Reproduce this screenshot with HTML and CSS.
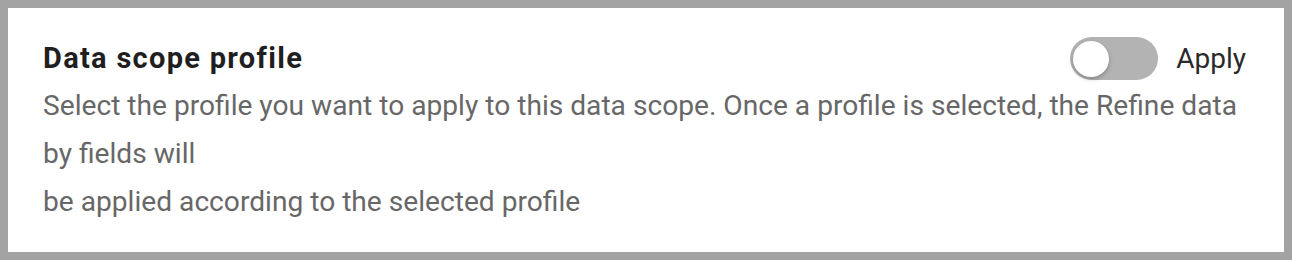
FILE: index.html
```html
<!DOCTYPE html>
<html lang="en">
<head>
  <meta charset="UTF-8">
  <title>Data scope profile</title>
  <link rel="stylesheet" href="styles.css">
</head>
<body>

  <div class="card">
    <div class="card-header">
      <h2>Data scope profile</h2>
      <label class="switch">
        <input type="checkbox">
        <span class="track"><span class="knob"></span></span>
        <span class="switch-label">Apply</span>
      </label>
    </div>
    <p class="desc">Select the profile you want to apply to this data scope. Once a profile is selected, the Refine data by fields will<br>be applied according to the selected profile</p>
  </div>

</body>
</html>
```

FILE: styles.css
```css
html {
  background-color: #a3a3a3;
}

body {
  font-family: Roboto, "Liberation Sans", Arial, sans-serif;
  margin: 8px;
}

.card {
  background-color: white;
  height: 244px;
  box-sizing: border-box;
  padding: 26px 38px 0 35px;
}

.card-header {
  display: flex;
  align-items: center;
  justify-content: space-between;
  height: 48px;
}

.card-header h2 {
  margin: 0;
  font-size: 29px;
  font-weight: 700;
  letter-spacing: 1.3px;
  color: #1f1f1f;
}

/* Interruptor */
.switch {
  display: flex;
  align-items: center;
  gap: 18px;
  cursor: pointer;
}

.switch input {
  display: none;
}

.track {
  display: block;
  width: 88px;
  height: 43px;
  border-radius: 22px;
  background-color: #b3b3b3;
  position: relative;
}

.knob {
  position: absolute;
  top: 4px;
  left: 3px;
  width: 36px;
  height: 36px;
  border-radius: 50%;
  background-color: white;
  box-shadow: 0 2px 4px rgba(0, 0, 0, 0.25);
}

.switch-label {
  font-size: 28px;
  color: #2a2a2a;
}

.desc {
  margin: 0;
  font-size: 28.15px;
  line-height: 48px;
  color: #676767;
}
```
